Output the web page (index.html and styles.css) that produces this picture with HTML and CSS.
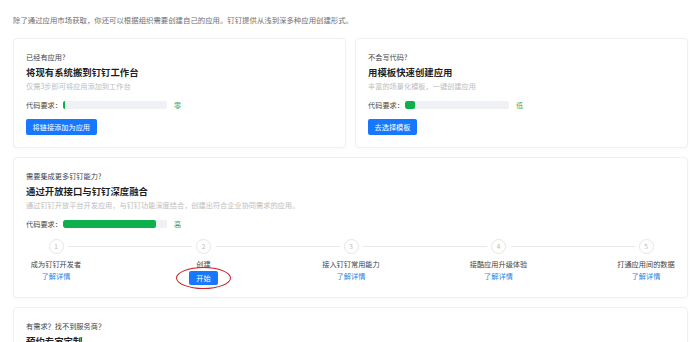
FILE: index.html
```html
<!DOCTYPE html>
<html lang="zh-CN">
<head>
    <meta charset="UTF-8">
    <meta name="viewport" content="width=device-width, initial-scale=1.0">
    <title>创建应用</title>
    <link rel="stylesheet" href="styles.css">
</head>
<body>

    <div class="page">
        <p class="intro">除了通过应用市场获取，你还可以根据组织需要创建自己的应用。钉钉提供从浅到深多种应用创建形式。</p>

        <!-- Two quick options -->
        <div class="card-row">
            <div class="card">
                <div class="card-label">已经有应用?</div>
                <h2 class="card-title">将现有系统搬到钉钉工作台</h2>
                <div class="card-desc">仅需3步即可将应用添加到工作台</div>
                <div class="code-row">
                    <span>代码要求：</span>
                    <span class="bar"><span class="bar-fill fill-zero"></span></span>
                    <span class="level">零</span>
                </div>
                <button class="btn">将链接添加为应用</button>
            </div>

            <div class="card">
                <div class="card-label">不会写代码?</div>
                <h2 class="card-title">用模板快速创建应用</h2>
                <div class="card-desc">丰富的场景化模板，一键创建应用</div>
                <div class="code-row">
                    <span>代码要求：</span>
                    <span class="bar"><span class="bar-fill fill-low"></span></span>
                    <span class="level">低</span>
                </div>
                <button class="btn">去选择模板</button>
            </div>
        </div>

        <!-- Open platform -->
        <div class="card">
            <div class="card-label">需要集成更多钉钉能力?</div>
            <h2 class="card-title">通过开放接口与钉钉深度融合</h2>
            <div class="card-desc">通过钉钉开放平台开发应用，与钉钉功能深度结合，创建出符合企业协同需求的应用。</div>
            <div class="code-row">
                <span>代码要求：</span>
                <span class="bar"><span class="bar-fill fill-high"></span></span>
                <span class="level">高</span>
            </div>

            <div class="steps">
                <div class="step">
                    <div class="step-main">
                        <span class="step-num">1</span>
                        <div class="step-title">成为钉钉开发者</div>
                        <a href="#" class="step-link">了解详情</a>
                    </div>
                </div>
                <div class="step">
                    <div class="step-main">
                        <span class="step-num">2</span>
                        <div class="step-title">创建</div>
                        <div class="start-wrap">
                            <button class="btn btn-small">开始</button>
                            <span class="mark"></span>
                        </div>
                    </div>
                </div>
                <div class="step">
                    <div class="step-main">
                        <span class="step-num">3</span>
                        <div class="step-title">接入钉钉常用能力</div>
                        <a href="#" class="step-link">了解详情</a>
                    </div>
                </div>
                <div class="step">
                    <div class="step-main">
                        <span class="step-num">4</span>
                        <div class="step-title">接酷应用升级体验</div>
                        <a href="#" class="step-link">了解详情</a>
                    </div>
                </div>
                <div class="step step-last">
                    <div class="step-main">
                        <span class="step-num">5</span>
                        <div class="step-title">打通应用间的数据</div>
                        <a href="#" class="step-link">了解详情</a>
                    </div>
                </div>
            </div>
        </div>

        <!-- Expert service -->
        <div class="card">
            <div class="card-label">有需求？找不到服务商？</div>
            <h2 class="card-title">预约专家定制</h2>
            <div class="card-desc">由钉钉认证的服务商为你量身定制应用</div>
        </div>
    </div>

</body>
</html>
```

FILE: styles.css
```css
/* Reset */
* {
    margin: 0;
    padding: 0;
    box-sizing: border-box;
    font-family: "Noto Sans CJK SC", "Noto Sans", sans-serif;
}

body {
    background: #ffffff;
    color: #333;
}

.page {
    padding: 14px 12px 0 13px;
    display: flex;
    flex-direction: column;
    gap: 9px;
}

.intro {
    font-size: 7.4px;
    line-height: 12px;
    color: #6f6f6f;
    margin-bottom: 3px;
}

/* Cards */
.card-row {
    display: flex;
    gap: 9px;
}

.card-row .card {
    flex: 1;
}

.card {
    background: #fff;
    border: 1px solid #f0f0f0;
    border-radius: 4px;
    padding: 12px 12px 12px;
    box-shadow: 0 1px 3px rgba(0, 0, 0, 0.03);
}

.card-label {
    font-size: 7.2px;
    line-height: 12px;
    color: #444;
}

.card-title {
    font-size: 9.4px;
    line-height: 16px;
    font-weight: 700;
    color: #1f1f1f;
    margin-top: 1px;
}

.card-desc {
    font-size: 7.2px;
    line-height: 12px;
    color: #bdbdbd;
}

/* Code requirement row */
.code-row {
    display: flex;
    align-items: center;
    margin-top: 7px;
    font-size: 7.2px;
    line-height: 12px;
    color: #444;
}

.bar {
    width: 104px;
    height: 8px;
    border-radius: 2px;
    background: #f0f1f4;
    margin-left: 1px;
    overflow: hidden;
}

.bar-fill {
    display: block;
    height: 100%;
    background: #0eb04c;
    border-radius: 2px;
}

.fill-zero { width: 2px; border-radius: 0; }
.fill-low  { width: 10px; }
.fill-high { width: 93px; }

.level {
    color: #3aa865;
    margin-left: 7px;
}

/* Buttons */
.btn {
    display: block;
    margin-top: 8px;
    height: 16px;
    padding: 0 6.5px;
    background: #1677ff;
    color: #fff;
    border: none;
    border-radius: 2px;
    font-size: 7.2px;
    line-height: 16px;
    cursor: pointer;
}

.btn-small {
    margin-top: 0;
    height: 14px;
    line-height: 14px;
    width: 29px;
    padding: 0;
}

/* Steps */
.steps {
    display: flex;
    margin-top: 9px;
}

.step {
    position: relative;
    width: 147.5px;
    flex: none;
}

.step::after {
    content: "";
    position: absolute;
    top: 7px;
    left: 42px;
    width: 124px;
    height: 1px;
    background: #e9e9e9;
}

.step-last {
    width: 60px;
}

.step-last::after {
    display: none;
}

.step-main {
    width: 60px;
    display: flex;
    flex-direction: column;
    align-items: center;
}

.step-num {
    width: 15px;
    height: 15px;
    border: 1px solid #e6e6e6;
    border-radius: 50%;
    font-size: 6.5px;
    line-height: 13px;
    text-align: center;
    color: #b8b8b8;
}

.step-title {
    margin-top: 4px;
    font-size: 7.2px;
    line-height: 12px;
    color: #444;
    white-space: nowrap;
}

.step-link {
    font-size: 7.2px;
    line-height: 12px;
    color: #2a86e8;
    text-decoration: none;
    white-space: nowrap;
}

.start-wrap {
    position: relative;
    margin-top: 1px;
    height: 14px;
}

/* red annotation ring */
.mark {
    position: absolute;
    left: -13px;
    top: -4px;
    width: 55px;
    height: 22px;
    border: 1.5px solid #c8232c;
    border-radius: 50%;
}
```
